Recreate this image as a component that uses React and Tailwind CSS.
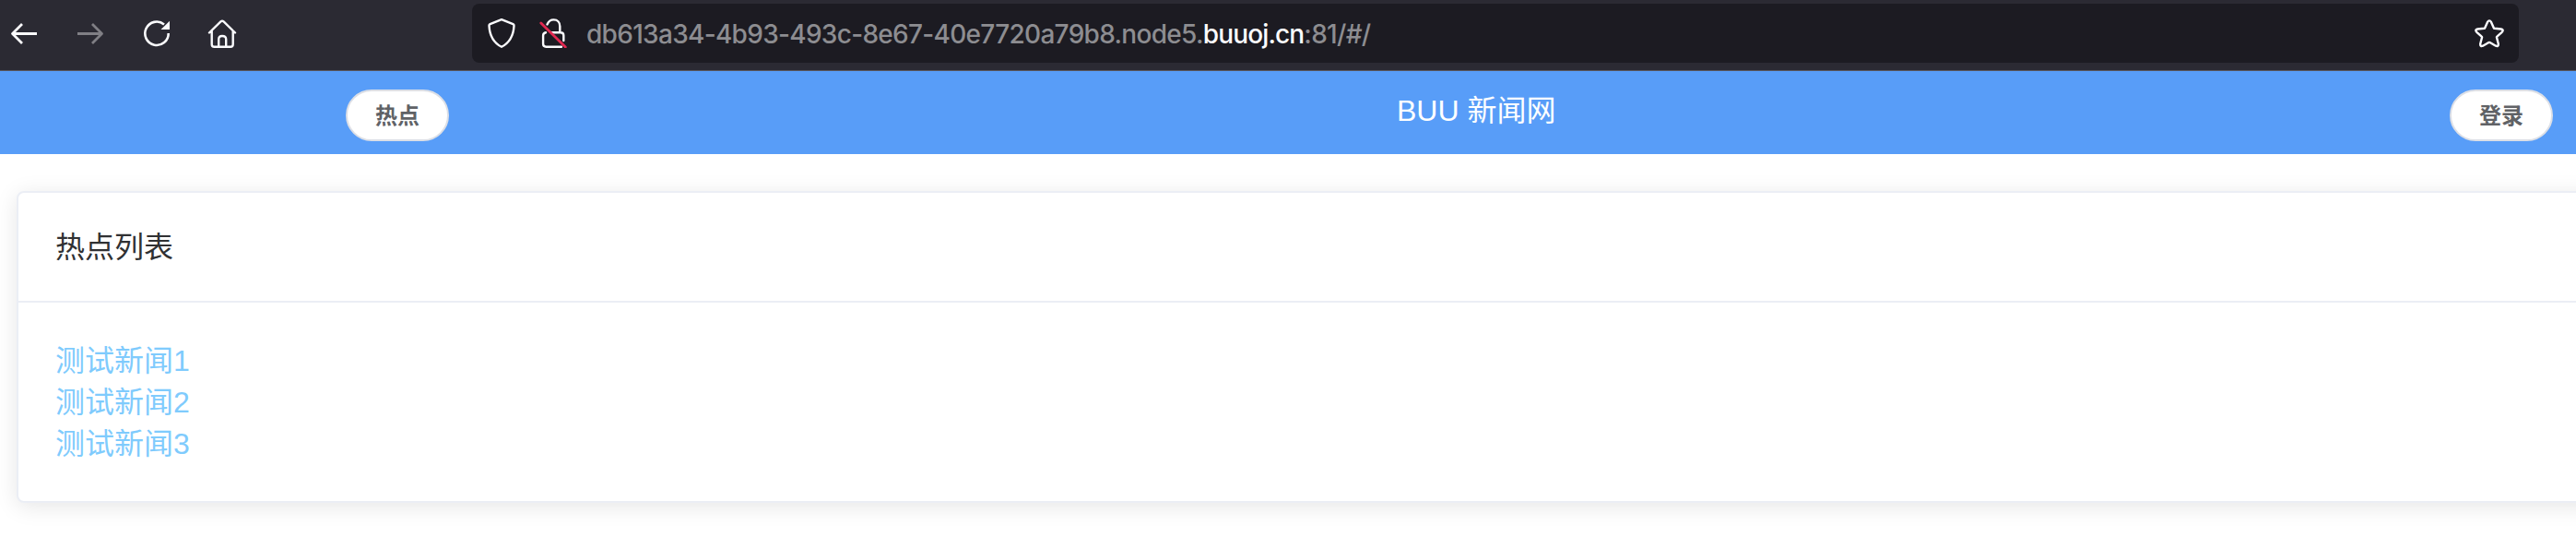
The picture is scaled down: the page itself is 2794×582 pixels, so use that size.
const news = ['测试新闻1', '测试新闻2', '测试新闻3'];

function Icon({ children, className = '' }) {
  return (
    <svg
      viewBox="0 0 32 32"
      fill="none"
      stroke="currentColor"
      strokeWidth="2.4"
      strokeLinecap="round"
      strokeLinejoin="round"
      className={`size-8 shrink-0 ${className}`}
    >
      {children}
    </svg>
  );
}

function Toolbar() {
  return (
    <header className="flex h-[77px] items-start border-b border-[#57565d] bg-[#2b2a33] pt-1 text-[#fbfbfe]">
      <nav className="flex h-16 w-[512px] shrink-0 items-center gap-10 pl-[10px]">
        <Icon>
          <path d="M30 16.500H3.500M14 6L3.500 16.500L14 27" strokeLinecap="butt" strokeWidth="2.800" />
        </Icon>
        <Icon className="text-[#807f85]">
          <path d="M2 16.500H28.500M18 6L28.500 16.500L18 27" strokeLinecap="butt" strokeWidth="2.800" />
        </Icon>
        <Icon>
          <path d="M28.700 16A12.700 12.700 0 1 1 24 6.400" strokeLinecap="butt" strokeWidth="2.600" />
          <path d="M30 2.800V12H20.500Z" fill="currentColor" stroke="none" />
        </Icon>
        <Icon className="-ml-px">
          <path d="M2 15.500L14.400 3.400Q16 2 17.600 3.400L30 15.500M4.700 13.500V28Q4.700 30.700 7.400 30.700H25Q27.700 30.700 27.700 28V13.500M12.200 30V22.500Q12.200 19 16 19Q20.200 19 20.200 22.500V30" />
        </Icon>
      </nav>
      <div className="flex h-16 w-[2220px] items-center rounded-lg bg-[#1c1b22] pl-4 pr-4">
        <Icon>
          <path d="M16 1.200L28.500 6.200Q29.600 6.700 29.500 8C28.900 18.500 25.500 26 16 30.800C6.500 26 3.100 18.500 2.500 8Q2.400 6.700 3.500 6.200Z" />
        </Icon>
        <Icon className="ml-6">
          <path d="M9.500 6.500C11 3 13.500 1.400 16.500 1.400C21 1.400 23.300 4.500 23.300 8.500V15M14.500 15.300H24Q27.300 15.300 27.300 18.500V24M8 15.300Q5.100 15.800 5.100 18.500V27.500Q5.100 30.700 8.300 30.700H25" />
          <path d="M2.800 5L29.300 31" className="text-[#e22850]" stroke="currentColor" strokeWidth="2.800" />
        </Icon>
        <div className="ml-5 whitespace-nowrap pt-0.5 font-['Inter',sans-serif] text-[28px] font-[450] leading-10 tracking-[-0.7px] text-[#8d8d91]">
          db613a34-4b93-493c-8e67-40e7720a79b8.node5.<span className="tracking-[-0.85px] text-[#fbfbfe]">buuoj.cn</span>:81/#/
        </div>
        <Icon className="ml-auto">
          <path d="M14 3.900Q16 .8 18 3.900L20.800 10.200Q21 10.700 21.600 10.800L28.800 11.500Q32 12.200 29.700 14.800L24.300 19.600Q23.800 20 24 20.700L25.800 27.500Q26 30.800 23 29.700L16.600 26Q16 25.700 15.400 26L9 29.700Q6 30.800 6.200 27.500L8 20.700Q8.200 20 7.700 19.600L2.300 14.800Q0 12.200 3.200 11.500L10.400 10.800Q11 10.700 11.200 10.200Z" />
        </Icon>
      </div>
    </header>
  );
}

function PillButton({ children }) {
  return (
    <button className="flex h-14 w-28 shrink-0 items-center justify-center rounded-full border-2 border-[#dcdfe6] bg-white pt-0.5 text-2xl font-bold leading-6 text-[#606266]">
      {children}
    </button>
  );
}

export default function App() {
  return (
    <div className="h-[582px] w-[2794px] overflow-hidden bg-white font-['Liberation_Sans','Noto_Sans_CJK_SC',sans-serif]">
      <Toolbar />
      <div className="flex h-[90px] items-start bg-[#589df8] pl-[375px] pr-[25px] pt-5">
        <PillButton>热点</PillButton>
        <h1 className="ml-[1028px] pt-px text-[32px] leading-[45px] text-white">BUU 新闻网</h1>
        <div className="ml-auto">
          <PillButton>登录</PillButton>
        </div>
      </div>
      <main className="pl-[18px] pt-10">
        <section className="h-[338px] w-[2850px] rounded-lg border-2 border-[#ebeef5] bg-white text-[32px] leading-[45px] shadow-[0_4px_24px_rgba(0,0,0,0.1)]">
          <h2 className="h-[119px] border-b-2 border-[#ebeef5] px-10 pt-[37px] text-[#303133]">热点列表</h2>
          <ul className="px-10 pt-[41px] text-[#7fcbfd]">
            {news.map((title) => (
              <li key={title}>{title}</li>
            ))}
          </ul>
        </section>
      </main>
    </div>
  );
}
